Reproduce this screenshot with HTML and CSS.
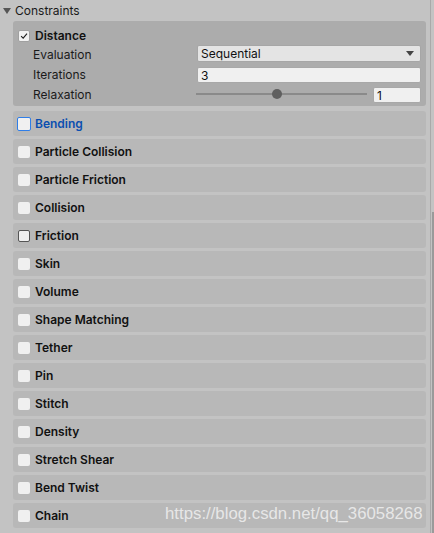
FILE: index.html
```html
<!DOCTYPE html>
<html>
<head>
<meta charset="utf-8">
<link rel="stylesheet" href="styles.css">
</head>
<body>
<div class="window">
  <div class="main">
    <div class="header">
      <span class="foldout"></span>
      <span class="title">Constraints</span>
    </div>
    <div class="list">
      <div class="panel distance">
        <div class="prow head">
          <span class="cb checked"><svg width="12" height="12" viewBox="0 0 12 12"><path d="M2.5 6.2 L5 8.6 L9.6 3.2" fill="none" stroke="#1e1e1e" stroke-width="1.3"/></svg></span>
          <span class="name">Distance</span>
        </div>
        <div class="prow">
          <span class="label">Evaluation</span>
          <div class="dropdown"><span>Sequential</span><span class="arrow"></span></div>
        </div>
        <div class="prow">
          <span class="label">Iterations</span>
          <div class="field wide">3</div>
        </div>
        <div class="prow">
          <span class="label">Relaxation</span>
          <div class="slider"><div class="track"></div><div class="knob"></div></div>
          <div class="field small">1</div>
        </div>
      </div>
      <div class="panel row focus"><span class="cb"></span><span class="name">Bending</span></div>
      <div class="panel row"><span class="cb"></span><span class="name">Particle Collision</span></div>
      <div class="panel row"><span class="cb"></span><span class="name">Particle Friction</span></div>
      <div class="panel row"><span class="cb"></span><span class="name">Collision</span></div>
      <div class="panel row hover"><span class="cb"></span><span class="name">Friction</span></div>
      <div class="panel row"><span class="cb"></span><span class="name">Skin</span></div>
      <div class="panel row"><span class="cb"></span><span class="name">Volume</span></div>
      <div class="panel row"><span class="cb"></span><span class="name">Shape Matching</span></div>
      <div class="panel row"><span class="cb"></span><span class="name">Tether</span></div>
      <div class="panel row"><span class="cb"></span><span class="name">Pin</span></div>
      <div class="panel row"><span class="cb"></span><span class="name">Stitch</span></div>
      <div class="panel row"><span class="cb"></span><span class="name">Density</span></div>
      <div class="panel row"><span class="cb"></span><span class="name">Stretch Shear</span></div>
      <div class="panel row"><span class="cb"></span><span class="name">Bend Twist</span></div>
      <div class="panel row"><span class="cb"></span><span class="name">Chain</span></div>
    </div>
  </div>
  <div class="scrollbar"><div class="thumb"></div></div>
</div>
<div class="watermark">https://blog.csdn.net/qq_36058268</div>
</body>
</html>
```
FILE: styles.css
```css
html, body {
  margin: 0;
  padding: 0;
}
body {
  width: 434px;
  height: 533px;
  overflow: hidden;
  background: #c3c3c3;
  font-family: Inter, "Noto Sans", sans-serif;
  font-size: 12px;
  color: #111;
  position: relative;
}
.window {
  display: flex;
  height: 533px;
}
.main {
  width: 430px;
  flex: none;
}
.header {
  height: 21px;
  display: flex;
  align-items: center;
  padding-left: 3px;
}
.foldout {
  width: 0;
  height: 0;
  border-left: 4px solid transparent;
  border-right: 4px solid transparent;
  border-top: 6px solid #555;
  margin-right: 4px;
  margin-top: 1px;
}
.title {
  color: #1a1a1a;
}
.list {
  display: flex;
  flex-direction: column;
  gap: 3px;
  padding-left: 13px;
  padding-right: 4px;
}
.panel {
  background: #b8b8b8;
  border-radius: 3px;
}
.distance {
  background: #acacac;
  padding: 4px 0 2px 0;
  margin-bottom: 2px;
}
.prow {
  height: 20px;
  display: flex;
  align-items: center;
  padding-left: 20px;
}
.prow.head {
  height: 18px;
  padding-left: 5px;
  padding-top: 1px;
}
.label {
  width: 164px;
  color: #1a1a1a;
}
.row {
  height: 25px;
  display: flex;
  align-items: center;
  padding-left: 5px;
}
.cb {
  width: 12px;
  height: 12px;
  background: #f0f0f0;
  border-radius: 2px;
  margin-right: 5px;
  box-sizing: border-box;
  display: flex;
  align-items: center;
  justify-content: center;
  flex: none;
  margin-top: 1px;
}
.cb.checked {
  border: 1px solid #a0a0a0;
  background: #f2f2f2;
}
.name {
  font-weight: 600;
  color: #111;
}
.focus .cb {
  border: 1px solid #2f7ee8;
  width: 14px;
  height: 14px;
  margin-left: -1px;
  margin-right: 4px;
}
.focus .name {
  color: #0a4fb0;
}
.hover .cb {
  border: 1px solid #555;
}
.dropdown {
  width: 224px;
  height: 17px;
  box-sizing: border-box;
  background: #e4e4e4;
  border: 1px solid #a6a6a6;
  border-radius: 2px;
  display: flex;
  align-items: center;
  justify-content: space-between;
  padding: 0 6px 0 3px;
  margin-top: -2px;
  color: #111;
}
.arrow {
  width: 0;
  height: 0;
  border-left: 4px solid transparent;
  border-right: 4px solid transparent;
  border-top: 5px solid #444;
}
.field {
  height: 16px;
  box-sizing: border-box;
  background: #f0f0f0;
  border: 1px solid #a8a8a8;
  border-radius: 2px;
  display: flex;
  align-items: center;
  padding-left: 3px;
  color: #111;
}
.field.wide {
  width: 224px;
  margin-top: 2px;
}
.field.small {
  width: 48px;
  margin-left: 6px;
  margin-top: 2px;
}
.slider {
  width: 171px;
  margin-left: -1px;
  height: 12px;
  position: relative;
}
.track {
  position: absolute;
  left: 0;
  right: 0;
  top: 5px;
  height: 2px;
  background: #8a8a8a;
}
.knob {
  position: absolute;
  left: 76px;
  top: 1px;
  width: 10px;
  height: 10px;
  border-radius: 50%;
  background: #5f5f5f;
}
.scrollbar {
  width: 4px;
  border-left: 1px solid #a9a9a9;
  background: #c3c3c3;
  position: relative;
}
.thumb {
  position: absolute;
  left: 1px;
  right: 0;
  top: 212px;
  bottom: 0;
  background: #9a9a9a;
}
.watermark {
  position: absolute;
  left: 165px;
  top: 504px;
  font-family: "Liberation Sans", Arial, sans-serif;
  font-size: 16.8px;
  color: rgba(240, 240, 240, 0.85);
}
```
